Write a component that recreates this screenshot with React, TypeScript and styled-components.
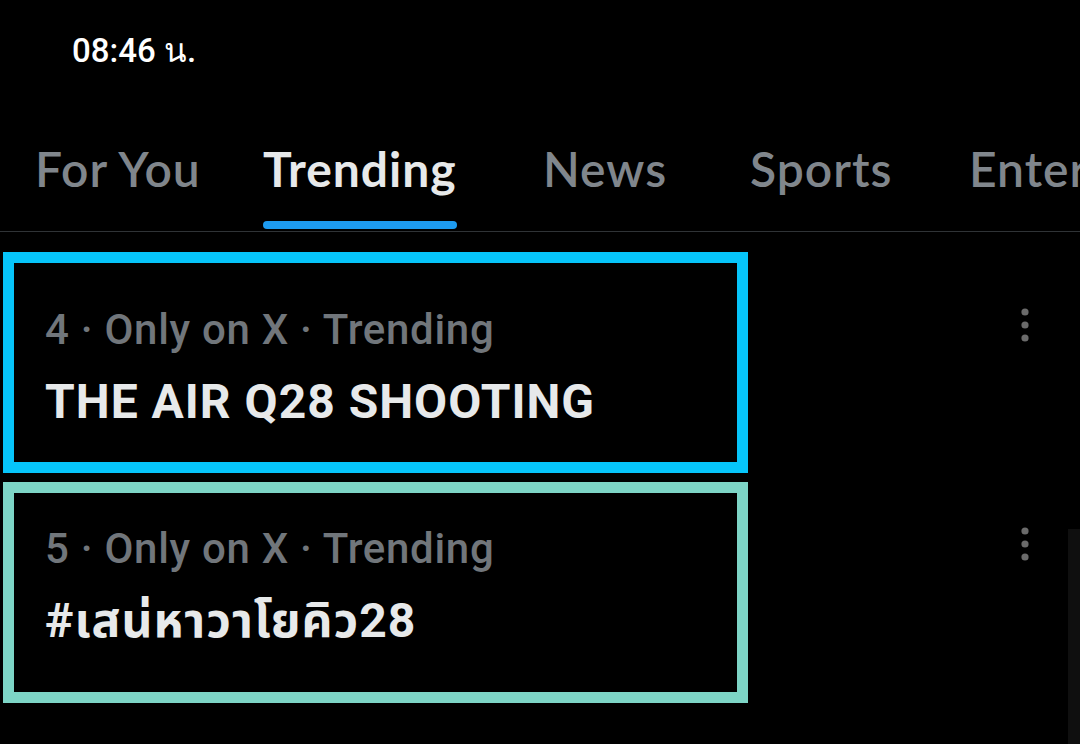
import React from "react";
import styled, { createGlobalStyle } from "styled-components";

const GlobalStyle = createGlobalStyle`
  html, body {
    margin: 0;
    padding: 0;
    background: #000;
  }
  * {
    box-sizing: border-box;
  }
`;

const Screen = styled.div`
  position: relative;
  width: 1080px;
  height: 744px;
  background: #000;
  overflow: hidden;
  font-family: Roboto, "Noto Sans", sans-serif;
`;

const StatusBar = styled.div`
  display: flex;
  align-items: center;
  height: 100px;
  padding-left: 72px;
  color: #fff;
  font-family: Roboto, "Noto Sans", sans-serif;
  font-size: 33px;
  font-weight: 500;
`;

const TabBar = styled.div`
  display: flex;
  align-items: stretch;
  height: 132px;
  padding-left: 35px;
  border-bottom: 1px solid #2f3336;
  white-space: nowrap;
`;

const Tab = styled.div<{ $w: number }>`
  display: flex;
  flex-direction: column;
  justify-content: flex-end;
  align-items: flex-start;
  flex: 0 0 ${(p) => p.$w}px;
`;

const TabInner = styled.div`
  display: flex;
  flex-direction: column;
`;

const TabLabel = styled.span<{ $active?: boolean }>`
  font-family: Lato, "Open Sans", sans-serif;
  font-size: 48px;
  line-height: 46px;
  letter-spacing: 1px;
  font-weight: ${(p) => (p.$active ? 700 : 600)};
  color: ${(p) => (p.$active ? "#e7e9ea" : "#80868c")};
`;

const Underline = styled.div<{ $active?: boolean }>`
  align-self: stretch;
  height: 8px;
  margin-top: 29px;
  margin-bottom: 2px;
  border-radius: 4px;
  background: ${(p) => (p.$active ? "#1d9bf0" : "transparent")};
`;

const List = styled.div`
  display: flex;
  flex-direction: column;
  gap: 9px;
  padding-top: 20px;
`;

const TrendRow = styled.div`
  display: flex;
  justify-content: space-between;
  align-items: flex-start;
  padding-left: 3px;
  padding-right: 48px;
`;

const HighlightBox = styled.div<{ $color: string; $pad: number }>`
  width: 745px;
  height: 221px;
  border: 11px solid ${(p) => p.$color};
  padding: ${(p) => p.$pad}px 0 0 31px;
`;

const Meta = styled.div`
  font-family: Roboto, "Noto Sans", sans-serif;
  font-size: 42px;
  line-height: 48px;
  letter-spacing: 0.7px;
  font-weight: 500;
  color: #71767b;
  white-space: nowrap;
`;

const Title = styled.div`
  margin-top: 20px;
  font-family: Roboto, "Noto Sans", "Noto Sans Thai", sans-serif;
  font-size: 48px;
  line-height: 56px;
  letter-spacing: 1px;
  font-weight: 700;
  color: #e7e9ea;
  white-space: nowrap;
`;

const MoreButton = styled.div<{ $top: number }>`
  margin-top: ${(p) => p.$top}px;
  width: 14px;
  height: 38px;
  color: #6b6b6b;
`;

const ScrollTrack = styled.div`
  position: absolute;
  right: 0;
  top: 529px;
  width: 12px;
  bottom: 0;
  background: #0f0f0f;
`;

const tabs = [
  { label: "For You", w: 228 },
  { label: "Trending", w: 280, active: true },
  { label: "News", w: 207 },
  { label: "Sports", w: 219 },
  { label: "Entertainment", w: 400 },
];

const trends = [
  {
    meta: "4 · Only on X · Trending",
    title: "THE AIR Q28 SHOOTING",
    color: "#06c5fa",
    pad: 43,
  },
  {
    meta: "5 · Only on X · Trending",
    title: "#เสน่หาวาโยคิว28",
    color: "#7dd5c6",
    pad: 32,
  },
];

function MoreIcon() {
  return (
    <svg width="14" height="38" viewBox="0 0 14 38">
      <circle cx="7" cy="6" r="3.6" fill="currentColor" />
      <circle cx="7" cy="19" r="3.6" fill="currentColor" />
      <circle cx="7" cy="32" r="3.6" fill="currentColor" />
    </svg>
  );
}

export default function App() {
  return (
    <>
      <GlobalStyle />
      <Screen>
        <StatusBar>08:46 น.</StatusBar>
        <TabBar>
          {tabs.map((t) => (
            <Tab key={t.label} $w={t.w}>
              <TabInner>
                <TabLabel $active={t.active}>{t.label}</TabLabel>
                <Underline $active={t.active} />
              </TabInner>
            </Tab>
          ))}
        </TabBar>
        <List>
          {trends.map((t) => (
            <TrendRow key={t.meta}>
              <HighlightBox $color={t.color} $pad={t.pad}>
                <Meta>{t.meta}</Meta>
                <Title>{t.title}</Title>
              </HighlightBox>
              <MoreButton $top={t.pad + 11}>
                <MoreIcon />
              </MoreButton>
            </TrendRow>
          ))}
        </List>
        <ScrollTrack />
      </Screen>
    </>
  );
}
